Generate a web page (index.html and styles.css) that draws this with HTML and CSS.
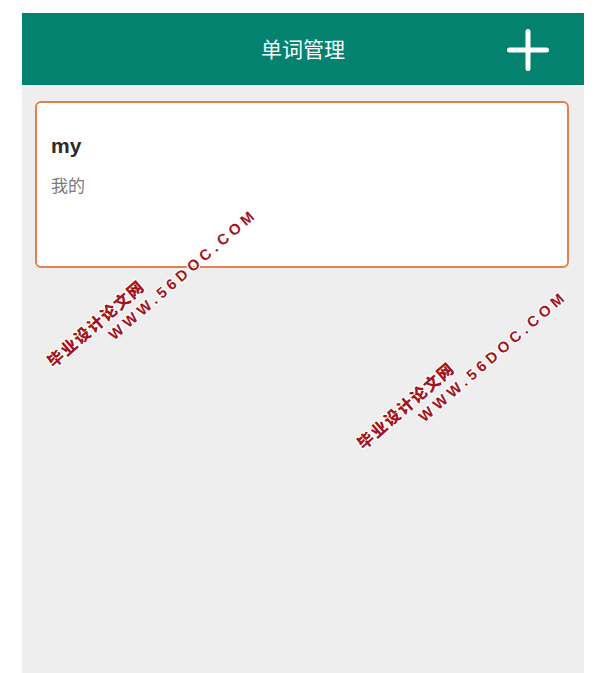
FILE: index.html
```html
<!DOCTYPE html>
<html lang="zh-CN">
<head>
<meta charset="utf-8">
<title>单词管理</title>
<link rel="stylesheet" href="styles.css">
</head>
<body>
<div class="phone">
  <header class="appbar">
    <h1 class="title">单词管理</h1>
    <button class="add" aria-label="添加">
      <svg width="42" height="42" viewBox="0 0 42 42"><path d="M21 2.5V39.5M2.5 21H39.5" stroke="#fff" stroke-width="5" stroke-linecap="round" fill="none"/></svg>
    </button>
  </header>
  <main class="content">
    <div class="card">
      <div class="word">my</div>
      <div class="meaning">我的</div>
    </div>
  </main>
</div>
<div class="watermark wm1">
  <div class="wm-cn">毕业设计论文网</div>
  <div class="wm-en">WWW.56DOC.COM</div>
</div>
<div class="watermark wm2">
  <div class="wm-cn">毕业设计论文网</div>
  <div class="wm-en">WWW.56DOC.COM</div>
</div>
</body>
</html>
```
FILE: styles.css
```css
html, body {
  margin: 0;
  padding: 0;
  background: #ffffff;
}
body {
  font-family: "Roboto", "Noto Sans CJK SC", sans-serif;
  position: relative;
  width: 605px;
  height: 673px;
  overflow: hidden;
}
.phone {
  margin: 13px 0 0 22px;
  width: 562px;
  height: 660px;
  background: #eeeeee;
  display: flex;
  flex-direction: column;
}
.appbar {
  height: 72px;
  background: #03836f;
  position: relative;
  display: flex;
  align-items: center;
  justify-content: center;
}
.title {
  margin: 0;
  color: #ffffff;
  font-family: "Noto Sans CJK SC", sans-serif;
  font-size: 21px;
  font-weight: 400;
  line-height: 24px;
  padding-bottom: 2px;
}
.add {
  position: absolute;
  right: 35px;
  top: 16px;
  width: 42px;
  height: 42px;
  padding: 0;
  border: 0;
  background: none;
  display: flex;
}
.content {
  padding: 16px 15px 0 13px;
}
.card {
  height: 167px;
  box-sizing: border-box;
  background: #ffffff;
  border: 2px solid #e3804f;
  border-radius: 6px;
  padding: 30px 15px 0 14px;
}
.word {
  font-family: "Liberation Sans", Arial, sans-serif;
  font-weight: 700;
  font-size: 21px;
  line-height: 26px;
  color: #2b2b2b;
}
.meaning {
  margin-top: 16px;
  font-family: "Noto Sans CJK SC", sans-serif;
  font-size: 17px;
  line-height: 20px;
  color: #7a7a7a;
}
.watermark {
  position: absolute;
  transform-origin: 0 9px;
  transform: rotate(-41deg);
  color: #a3141c;
  font-weight: 700;
  white-space: nowrap;
  text-shadow: 1px 0 #fff, -1px 0 #fff, 0 1px #fff, 0 -1px #fff, 1px 1px #fff, -1px -1px #fff, 1px -1px #fff, -1px 1px #fff;
}
.wm1 {
  left: 49px;
  top: 354px;
}
.wm2 {
  left: 359px;
  top: 436px;
}
.wm-cn {
  font-family: "Noto Sans CJK SC", sans-serif;
  font-weight: 900;
  font-size: 16px;
  line-height: 18px;
  letter-spacing: 1.5px;
}
.wm-en {
  font-family: "Liberation Sans", Arial, sans-serif;
  font-size: 15px;
  line-height: 16px;
  letter-spacing: 4.3px;
  margin: 4px 0 0 64px;
}
```
